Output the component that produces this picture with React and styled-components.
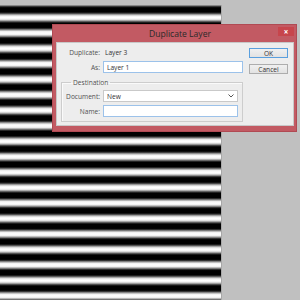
import React from "react";
import styled, { createGlobalStyle } from "styled-components";

const GlobalStyle = createGlobalStyle`
  html, body {
    margin: 0;
    padding: 0;
    background: #c0c0c0;
    overflow: hidden;
  }
  * { box-sizing: border-box; }
`;

// Workspace
const Workspace = styled.div`
  position: relative;
  width: 300px;
  height: 300px;
  padding-top: 5px;
  background: #c0c0c0;
  font-family: "Open Sans", "Noto Sans", sans-serif;
`;

const Canvas = styled.div`
  width: 222px;
  height: 295px;
  border-right: 1px solid #a8a8a8;
  background: repeating-linear-gradient(
    to bottom,
    #000 -10.59px,
    #000 -8.49px,
    #333 -7.29px,
    #999 -5.99px,
    #f0f0f0 -4.49px,
    #fff -2.86px,
    #f0f0f0 -1.23px,
    #999 0.27px,
    #333 1.57px,
    #000 2.77px,
    #000 4.87px
  );
`;

// Dialog
const Dialog = styled.div`
  position: absolute;
  left: 52px;
  top: 24px;
  width: 245px;
  height: 108px;
  background: #c25a63;
  border: 1px solid #b04a53;
  padding: 0 2px 5px 3px;
  display: flex;
  flex-direction: column;
`;

const TitleBar = styled.div`
  height: 17px;
  display: flex;
  align-items: center;
  justify-content: center;
  position: relative;
  font-size: 8.6px;
  color: #2a2a2a;
  padding-left: 10px;
`;

const CloseButton = styled.div`
  position: absolute;
  right: 0;
  top: 2px;
  width: 16px;
  height: 9px;
  background: #c7454c;
  color: #fff;
  font-size: 8px;
  line-height: 9px;
  text-align: center;
  font-weight: 700;
`;

const Body = styled.div`
  flex: 1;
  background: #ededed;
  border: 1px solid #c8c8c8;
  display: flex;
  padding: 4px 3px 0 0;
  font-size: 6.6px;
  color: #3a3a3a;
`;

const FormColumn = styled.div`
  width: 192px;
  display: flex;
  flex-direction: column;
`;

const Row = styled.div`
  display: flex;
  align-items: center;
  height: ${(p) => p.$h || 12}px;
  margin-top: ${(p) => p.$mt || 0}px;
`;

const Label = styled.div`
  width: ${(p) => p.$w || 46}px;
  text-align: right;
  padding-right: 3px;
  color: #505050;
  flex-shrink: 0;
`;

const Value = styled.div`
  padding-left: 2px;
  color: #333;
`;

const TextBox = styled.div`
  width: ${(p) => p.$w}px;
  height: 12px;
  background: #fff;
  border: 1px solid ${(p) => (p.$focus ? "#9cc2ea" : "#c9c9c9")};
  padding-left: 3px;
  display: flex;
  align-items: center;
  justify-content: space-between;
  color: #333;
`;

const Chevron = styled.svg`
  width: 6px;
  height: 4px;
  margin-right: 3px;
`;

const Group = styled.fieldset`
  margin: 5px 0 0 4px;
  width: 182px;
  height: 44px;
  padding: 3px 4px 0 0;
  border: 1px solid #cdcdcd;
  box-shadow: inset 1px 1px 0 #fafafa;
  display: flex;
  flex-direction: column;
`;

const Legend = styled.legend`
  margin-left: 9px;
  padding: 0 2px;
  color: #505050;
  font-size: 6.6px;
  line-height: 9px;
`;

const ButtonColumn = styled.div`
  display: flex;
  flex-direction: column;
  gap: 6px;
  padding-top: 1px;
`;

const Button = styled.div`
  width: 39px;
  height: 10px;
  border: 1px solid ${(p) => (p.$default ? "#5a9fde" : "#adadad")};
  background: linear-gradient(#f0f0f0, #e2e2e2);
  display: flex;
  align-items: center;
  justify-content: center;
  color: #333;
  font-size: 6.6px;
`;

export default function App() {
  return (
    <>
      <GlobalStyle />
      <Workspace>
        <Canvas />
        <Dialog>
          <TitleBar>
            Duplicate Layer
            <CloseButton>×</CloseButton>
          </TitleBar>
          <Body>
            <FormColumn>
              <Row $h={10}>
                <Label>Duplicate:</Label>
                <Value>Layer 3</Value>
              </Row>
              <Row $mt={4}>
                <Label>As:</Label>
                <TextBox $w={140} $focus>
                  Layer 1
                </TextBox>
              </Row>
              <Group>
                <Legend>Destination</Legend>
                <Row $h={12}>
                  <Label $w={41}>Document:</Label>
                  <TextBox $w={135}>
                    New
                    <Chevron viewBox="0 0 6 4">
                      <path d="M0.5 0.5 L3 3 L5.5 0.5" fill="none" stroke="#555" strokeWidth="1" />
                    </Chevron>
                  </TextBox>
                </Row>
                <Row $h={12} $mt={3}>
                  <Label $w={41}>Name:</Label>
                  <TextBox $w={135} $focus />
                </Row>
              </Group>
            </FormColumn>
            <ButtonColumn>
              <Button $default>OK</Button>
              <Button>Cancel</Button>
            </ButtonColumn>
          </Body>
        </Dialog>
      </Workspace>
    </>
  );
}
